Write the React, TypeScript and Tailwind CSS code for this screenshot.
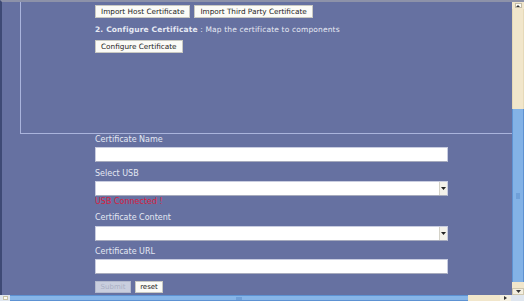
import React from "react";

const btn =
  "h-[13px] px-[5px] bg-[#fbfbf7] border border-[#c9c9c2] text-[7.3px] leading-[11px] text-[#1e1e1e] whitespace-nowrap";

const label = "block text-[8px] leading-[10px] text-[#e4e8f3]";

const campo = "w-[353px] h-[15px] bg-white border border-[#c9cde0] border-b-[#a7abbd]";

const Desplegable = ({ className }: { className: string }) => (
  <div className={`${campo} ${className} flex justify-end`}>
    <div className="w-[8px] h-full bg-[#f3f1ea] border-l border-[#d4d2c8] flex items-center justify-center">
      <svg width="5" height="3" viewBox="0 0 5 3">
        <path d="M0 0 L5 0 L2.5 3 Z" fill="#222" />
      </svg>
    </div>
  </div>
);

const App = () => {
  return (
    <div className="w-[524px] h-[301px] overflow-hidden flex flex-col bg-[#6671a1] font-['DejaVu_Sans',Verdana,sans-serif]">
      <div className="flex flex-1 min-h-0">
        <div className="flex-1 border-t-2 border-t-[#8d92a9] border-l-2 border-l-[#3e4a75]">
          {/* bloque de certificados */}
          <div className="ml-[18px] h-[132px] border-l border-b border-[#aab4dc] pl-[74px] pt-[3px]">
            <div className="flex gap-[4px]">
              <button className={btn}>Import Host Certificate</button>
              <button className={btn}>Import Third Party Certificate</button>
            </div>
            <p className="mt-[7px] text-[7.5px] leading-[10px] tracking-[0.15px] text-[#e7eaf4] whitespace-nowrap">
              <span className="font-bold">2. Configure Certificate</span> : Map the certificate to components
            </p>
            <button className={`${btn} block mt-[5px]`}>Configure Certificate</button>
          </div>

          {/* formulario */}
          <form className="pl-[93px]">
            <label className={`${label} mt-[1px]`}>Certificate Name</label>
            <input className={`${campo} mt-[2px] block`} />

            <label className={`${label} mt-[7px]`}>Select USB</label>
            <Desplegable className="mt-[2px]" />
            <p className="mt-[1px] text-[8px] leading-[10px] text-[#d8203f]">USB Connected !</p>

            <label className={`${label} mt-[6px]`}>Certificate Content</label>
            <Desplegable className="mt-[3px]" />

            <label className={`${label} mt-[6px]`}>Certificate URL</label>
            <input className={`${campo} mt-[2px] block`} />

            <div className="flex gap-[4px] mt-[7px]">
              <button
                type="button"
                disabled
                className="h-[12px] w-[36px] bg-[#c9cede] border border-[#b3b9cc] text-[7px] leading-[10px] text-[#aab0c4]"
              >
                Submit
              </button>
              <button
                type="button"
                className="h-[12px] w-[28px] bg-[#fbfbf7] border border-[#c9c9c2] text-[7px] leading-[10px] text-[#222]"
              >
                reset
              </button>
            </div>
          </form>
        </div>

        {/* barra vertical */}
        <div className="w-[12px] flex flex-col border-t-2 border-t-[#8d92a9]">
          <div className="h-[7px] bg-[#f1e6cb] flex justify-center items-center">
            <div className="w-[7px] h-[5px] bg-[#fdfcf7] border border-[#c2bba6] flex items-center justify-center">
              <svg width="4" height="2" viewBox="0 0 4 2">
                <path d="M0 2 L2 0 L4 2 Z" fill="#333" />
              </svg>
            </div>
          </div>
          <div className="h-[100px] bg-[#f1e6cb] border-x border-[#e6d9b8]" />
          <div className="flex-1 bg-[#83b2e6] border-x border-[#5e92d2] flex items-center justify-center">
            <div className="w-[4px] h-[6px] bg-[#6f9fd8]" />
          </div>
          <div className="h-[6px] bg-[#f1e6cb]" />
          <div className="h-[7px] bg-[#f4efe0] flex items-center justify-center border border-[#cfc7ae]">
            <svg width="5" height="3" viewBox="0 0 5 3">
              <path d="M0 0 L5 0 L2.5 3 Z" fill="#333" />
            </svg>
          </div>
        </div>
      </div>

      {/* barra horizontal */}
      <div className="h-[6px] flex">
        <div className="w-[10px] bg-[#dfe6ef] flex items-center justify-center">
          <div className="w-[5px] h-[4px] bg-[#fbfaf2] border border-[#c8c3a8]" />
        </div>
        <div className="w-[458px] bg-[#86b5e8] border-y border-[#5d92d3] flex items-center justify-center">
          <div className="w-[6px] h-[3px] bg-[#6f9fd8]" />
        </div>
        <div className="w-[32px] bg-[#f1e6cb]" />
        <div className="w-[11px] bg-[#f4efe0] flex items-center justify-center">
          <svg width="3" height="4" viewBox="0 0 3 4">
            <path d="M0 0 L3 2 L0 4 Z" fill="#333" />
          </svg>
        </div>
        <div className="flex-1 bg-[#dfe6ef]" />
      </div>
    </div>
  );
};

export default App;
